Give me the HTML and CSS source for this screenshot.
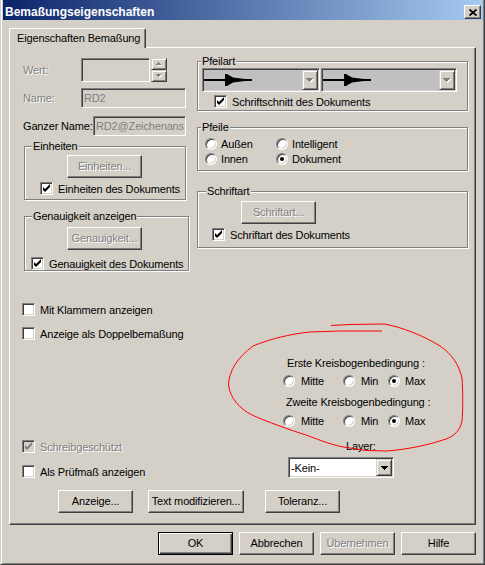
FILE: index.html
```html
<!DOCTYPE html>
<html lang="de">
<head>
    <meta charset="UTF-8">
    <title>Bemaßungseigenschaften</title>
    <link rel="stylesheet" href="styles.css">
</head>
<body>
<div class="window">
    <div class="titlebar">
        <span class="title">Bemaßungseigenschaften</span>
        <button class="close" title="Schließen">
            <svg width="8" height="7" viewBox="0 0 8 7"><path d="M0.5 0.5L7.5 6.5M7.5 0.5L0.5 6.5" stroke="#000" stroke-width="1.8"/></svg>
        </button>
    </div>

    <div class="tabs"><div class="tab">Eigenschaften Bemaßung</div></div>

    <div class="panel">
        <div class="top">
            <!-- left column -->
            <div class="col-left">
                <div class="field f-wert">
                    <span class="lbl dis">Wert:</span>
                    <div class="edit edit-wert"></div>
                    <div class="spin">
                        <div class="spin-btn"><svg width="6" height="4" viewBox="0 0 6 4"><path d="M3 1h1v1h1v1h1v1h-5v-1h1v-1h1z" fill="#fff"/><path d="M2 0h1v1h1v1h1v1h-5v-1h1v-1h1z" fill="#808080"/></svg></div>
                        <div class="spin-btn"><svg width="6" height="4" viewBox="0 0 6 4"><path d="M1 1h5v1h-1v1h-1v1h-1v-1h-1v-1h-1z" fill="#fff"/><path d="M0 0h5v1h-1v1h-1v1h-1v-1h-1v-1h-1z" fill="#808080"/></svg></div>
                    </div>
                </div>
                <div class="field f-name">
                    <span class="lbl dis">Name:</span>
                    <div class="edit edit-name">RD2</div>
                </div>
                <div class="field f-full">
                    <span class="lbl">Ganzer Name:</span>
                    <div class="edit edit-full">RD2@Zeichenans</div>
                </div>

                <fieldset class="grp g-einh">
                    <legend>Einheiten</legend>
                    <button class="btn" disabled>Einheiten...</button>
                    <label class="check"><span class="cb"><svg width="11" height="11" viewBox="1 1 11 11"><path d="M3 5l2 2 5-5v3l-5 5-2-2z"/></svg></span>Einheiten des Dokuments</label>
                </fieldset>

                <fieldset class="grp g-gen">
                    <legend>Genauigkeit anzeigen</legend>
                    <button class="btn" disabled>Genauigkeit...</button>
                    <label class="check"><span class="cb"><svg width="11" height="11" viewBox="1 1 11 11"><path d="M3 5l2 2 5-5v3l-5 5-2-2z"/></svg></span>Genauigkeit des Dokuments</label>
                </fieldset>
            </div>

            <!-- right column -->
            <div class="col-right">
                <fieldset class="grp g-pfeilart">
                    <legend>Pfeilart</legend>
                    <div class="combos">
                        <div class="combo combo-a">
                            <div class="val"><svg width="50" height="12" viewBox="0 0 50 12"><rect x="0" y="5" width="48" height="2"/><path d="M21 0h2l6 3.5 12 1.5v2l-12 1.5-6 3.5h-2z"/></svg></div>
                            <div class="drop"><svg width="8" height="5" viewBox="0 0 8 5"><path d="M1 1h7v1h-1v1h-1v1h-1v1h-1v-1h-1v-1h-1v-1h-1z" fill="#fff"/><path d="M0 0h7v1h-1v1h-1v1h-1v1h-1v-1h-1v-1h-1v-1h-1z" fill="#808080"/></svg></div>
                        </div>
                        <div class="combo combo-b">
                            <div class="val"><svg width="50" height="12" viewBox="0 0 50 12"><rect x="0" y="5" width="48" height="2"/><path d="M21 0h2l6 3.5 12 1.5v2l-12 1.5-6 3.5h-2z"/></svg></div>
                            <div class="drop"><svg width="8" height="5" viewBox="0 0 8 5"><path d="M1 1h7v1h-1v1h-1v1h-1v1h-1v-1h-1v-1h-1v-1h-1z" fill="#fff"/><path d="M0 0h7v1h-1v1h-1v1h-1v1h-1v-1h-1v-1h-1v-1h-1z" fill="#808080"/></svg></div>
                        </div>
                    </div>
                    <label class="check"><span class="cb"><svg width="11" height="11" viewBox="1 1 11 11"><path d="M3 5l2 2 5-5v3l-5 5-2-2z"/></svg></span>Schriftschnitt des Dokuments</label>
                </fieldset>

                <fieldset class="grp g-pfeile">
                    <legend>Pfeile</legend>
                    <div class="radios">
                        <label class="radio"><span class="rb"></span>Außen</label>
                        <label class="radio"><span class="rb"></span>Intelligent</label>
                        <label class="radio"><span class="rb"></span>Innen</label>
                        <label class="radio"><span class="rb on"></span>Dokument</label>
                    </div>
                </fieldset>

                <fieldset class="grp g-schrift">
                    <legend>Schriftart</legend>
                    <button class="btn" disabled>Schriftart...</button>
                    <label class="check"><span class="cb"><svg width="11" height="11" viewBox="1 1 11 11"><path d="M3 5l2 2 5-5v3l-5 5-2-2z"/></svg></span>Schriftart des Dokuments</label>
                </fieldset>
            </div>
        </div>

        <div class="lower">
            <label class="check ck-klam"><span class="cb"></span>Mit Klammern anzeigen</label>
            <label class="check ck-doppel"><span class="cb"></span>Anzeige als Doppelbemaßung</label>

            <div class="arc">
                <div class="arc-title">Erste Kreisbogenbedingung :</div>
                <div class="arc-row">
                    <label class="radio"><span class="rb"></span>Mitte</label>
                    <label class="radio"><span class="rb"></span>Min</label>
                    <label class="radio"><span class="rb on"></span>Max</label>
                </div>
                <div class="arc-title arc-title2">Zweite Kreisbogenbedingung :</div>
                <div class="arc-row arc-row2">
                    <label class="radio"><span class="rb"></span>Mitte</label>
                    <label class="radio"><span class="rb"></span>Min</label>
                    <label class="radio"><span class="rb on"></span>Max</label>
                </div>
            </div>

            <div class="bottom-row">
                <div class="bottom-left">
                    <label class="check dis"><span class="cb off"><svg width="11" height="11" viewBox="1 1 11 11"><path d="M3 5l2 2 5-5v3l-5 5-2-2z"/></svg></span>Schreibgeschützt</label>
                    <label class="check ck-pruef"><span class="cb"></span>Als Prüfmaß anzeigen</label>
                </div>
                <div class="layer">
                    <div class="layer-lbl">Layer:</div>
                    <div class="combo combo-layer">
                        <div class="val">-Kein-</div>
                        <div class="drop"><svg width="7" height="4" viewBox="0 0 7 4"><path d="M0 0h7v1h-1v1h-1v1h-1v1h-1v-1h-1v-1h-1v-1h-1z"/></svg></div>
                    </div>
                </div>
            </div>

            <div class="tools">
                <button class="btn">Anzeige...</button>
                <button class="btn btn-wide">Text modifizieren...</button>
                <button class="btn">Toleranz...</button>
            </div>
        </div>
    </div>

    <div class="footer">
        <button class="btn btn-default">OK</button>
        <button class="btn">Abbrechen</button>
        <button class="btn" disabled>Übernehmen</button>
        <button class="btn">Hilfe</button>
    </div>

    <!-- hand drawn red mark over the dialog -->
    <svg class="markup" width="485" height="565" viewBox="0 0 485 565">
        <path d="M331 325.5L350 324.5L384 324C402 327 424 336 440 346C452 354 459 365 462 378C463 392 463 410 462 421C460 431 454 436 446 439C428 445 410 449 387 451L366 450.5L350 448C333 446 320 440 306 435C290 430 265 421 252 415C240 409 230 398 228.5 385C229 371 237 358 253 346C270 339 290 334 310 332L340 331L382 331" fill="none" stroke="#ff0000" stroke-width="1"/>
    </svg>
</div>
</body>
</html>
```

FILE: styles.css
```css
* { box-sizing: border-box; }
body { margin: 0; background: #D4D0C8; font-family: "Liberation Sans", Arial, sans-serif; font-size: 11px; letter-spacing: -0.15px; color: #000; }
button { font: inherit; color: inherit; letter-spacing: inherit; }

.window { position: relative; width: 485px; height: 565px; background: #D4D0C8; border-left: 1px solid #D4D0C8; border-right: 1px solid #404040; border-bottom: 1px solid #404040; box-shadow: inset 1px 0 #fff, inset -1px -1px #808080; padding: 0 1px 0 2px; }

/* title bar */
.titlebar { display: flex; justify-content: space-between; align-items: flex-start; height: 20px; background: linear-gradient(to right, #0A246A, #A6CAF0); }
.title { margin: 5px 0 0 2px; color: #fff; font-weight: bold; font-size: 12px; line-height: 14px; letter-spacing: 0; }
.close { display: flex; align-items: center; justify-content: center; width: 17px; height: 14px; margin: 5px 2px 0 0; padding: 0; background: #D4D0C8; border: 1px solid; border-color: #fff #404040 #404040 #fff; box-shadow: inset -1px -1px #808080; }

/* tab */
.tabs { display: flex; margin: 8px 0 0 6px; position: relative; z-index: 1; }
.tab { width: 137px; height: 20px; margin-bottom: -1px; padding: 3px 0 0 7px; line-height: 13px; background: #D4D0C8; border: 1px solid #fff; border-right-color: #404040; border-bottom: none; border-radius: 2px 2px 0 0; box-shadow: inset -1px 0 #808080; }
.panel { width: 467px; height: 478px; margin-left: 6px; border: 1px solid; border-color: #fff #404040 #404040 #fff; box-shadow: inset -1px -1px #808080; }

/* common controls */
.dis { color: #808080; text-shadow: 1px 1px #fff; }
.btn { display: block; width: 75px; height: 23px; padding: 0; background: #D4D0C8; border: 1px solid; border-color: #fff #404040 #404040 #fff; box-shadow: inset -1px -1px #808080; text-align: center; line-height: 19px; white-space: nowrap; }
.btn:disabled { color: #808080; text-shadow: 1px 1px #fff; }
.btn-default { border-color: #000; box-shadow: inset 1px 1px #fff, inset -1px -1px #404040, inset -2px -2px #808080; }
.btn-wide { width: 96px; }

.edit { height: 100%; padding: 0 2px; line-height: 18px; white-space: nowrap; overflow: hidden; color: #808080; border: 1px solid; border-color: #808080 #fff #fff #808080; box-shadow: inset 1px 1px #404040, inset -1px -1px #D4D0C8; }

.check { display: flex; align-items: center; height: 13px; white-space: nowrap; }
.cb { flex: none; width: 13px; height: 13px; margin-right: 5px; background: #fff; border: 1px solid; border-color: #808080 #fff #fff #808080; box-shadow: inset 1px 1px #404040, inset -1px -1px #D4D0C8; }
.cb svg { display: block; }
.cb.off { background: #D4D0C8; }
.cb.off svg { fill: #808080; }

.radio { display: flex; align-items: center; height: 12px; white-space: nowrap; }
.rb { flex: none; display: flex; align-items: center; justify-content: center; width: 12px; height: 12px; margin-right: 4px; border-radius: 50%; background: #fff; border: 1px solid; border-color: #808080 #fff #fff #808080; box-shadow: inset 1px 1px #404040, inset -1px -1px #D4D0C8; }
.rb.on::after { content: ""; width: 4px; height: 4px; border-radius: 50%; background: #000; }

.combo { display: flex; height: 24px; padding: 1px; background: #C0C0C0; border: 1px solid; border-color: #808080 #fff #fff #808080; box-shadow: inset 1px 1px #404040, inset -1px -1px #D4D0C8; }
.combo .val { flex: 1; display: flex; align-items: center; overflow: hidden; white-space: nowrap; }
.combo .drop { flex: none; display: flex; align-items: center; justify-content: center; width: 16px; background: #D4D0C8; border: 1px solid; border-color: #D4D0C8 #404040 #404040 #D4D0C8; box-shadow: inset 1px 1px #fff, inset -1px -1px #808080; }

.grp { margin: 0; padding: 0; min-inline-size: 0; border: 1px solid #808080; box-shadow: inset 1px 1px #fff, 1px 1px #fff; }
.grp legend { padding: 0 1px; line-height: 13px; background: #D4D0C8; white-space: nowrap; }

/* top area */
.top { display: flex; align-items: flex-start; padding-left: 13px; }
.col-left { width: 166px; }
.col-right { width: 271px; margin-left: 8px; }

.field { display: flex; align-items: center; }
.f-wert { margin-top: 10px; height: 24px; }
.f-name { margin-top: 6px; height: 20px; }
.f-full { margin-top: 8px; height: 20px; }
.lbl { flex: none; width: 58px; white-space: nowrap; }
.f-full .lbl { width: 70px; }
.edit-wert { width: 69px; }
.edit-name { width: 105px; }
.edit-full { width: 93px; }

.spin { display: flex; flex-direction: column; height: 24px; margin-left: 1px; }
.spin-btn { display: flex; align-items: center; justify-content: center; width: 16px; height: 12px; background: #D4D0C8; border: 1px solid; border-color: #D4D0C8 #404040 #404040 #D4D0C8; box-shadow: inset 1px 1px #fff, inset -1px -1px #808080; }

.g-einh { width: 162px; height: 60px; margin: 4px 0 0 1px; }
.g-einh legend { margin-left: 7px; }
.g-einh .btn { margin: 2px 0 0 42px; }
.g-einh .check { margin-top: 4px; padding-left: 15px; }

.g-gen { width: 165px; height: 61px; margin: 10px 0 0 1px; }
.g-gen legend { margin-left: 7px; }
.g-gen .btn { margin: 4px 0 0 42px; }
.g-gen .check { margin-top: 7px; padding-left: 6px; }

.g-pfeilart { height: 56px; margin-top: 7px; }
.g-pfeilart legend { margin-left: 3px; }
.combos { display: flex; gap: 1px; margin-left: 4px; }
.combo-a { width: 118px; }
.combo-b { width: 136px; }
.g-pfeilart .check { margin-top: 3px; padding-left: 16px; }

.g-pfeile { height: 50px; margin-top: 10px; }
.g-pfeile legend { margin-left: 3px; }
.radios { display: grid; grid-template-columns: 71px auto; row-gap: 3px; margin: 4px 0 0 7px; }

.g-schrift { height: 63px; margin-top: 14px; }
.g-schrift legend { margin-left: 8px; }
.g-schrift .btn { margin: 3px 0 0 43px; }
.g-schrift .check { margin-top: 4px; padding-left: 14px; }

/* lower area */
.lower { padding-left: 12px; }
.ck-klam { margin-top: 32px; }
.ck-doppel { margin-top: 11px; }

.arc { margin: 17px 0 0 261px; }
.arc-title { height: 13px; line-height: 13px; padding-left: 4px; }
.arc-title2 { margin-top: 9px; padding-left: 3px; }
.arc-row { display: grid; grid-template-columns: 60px 45px auto; margin-top: 5px; }
.arc-row2 { margin-top: 6px; }
.arc .rb { margin-right: 6px; }
.arc .radio:last-child .rb { margin-right: 5px; }

.bottom-row { display: flex; margin-top: 13px; }
.bottom-left { width: 266px; }
.ck-pruef { margin-top: 12px; }
.layer-lbl { height: 13px; line-height: 13px; padding-left: 58px; }
.combo-layer { width: 106px; height: 21px; margin-top: 4px; background: #fff; }
.combo-layer .val { padding-left: 1px; }

.tools { display: flex; margin: 12px 0 0 36px; }
.tools .btn + .btn { margin-left: 15px; }
.tools .btn:last-child { margin-left: 21px; }

/* dialog buttons */
.footer { display: flex; justify-content: flex-end; gap: 6px; margin-top: 7px; padding-right: 7px; }

.markup { position: absolute; top: 0; left: -1px; pointer-events: none; }
```
